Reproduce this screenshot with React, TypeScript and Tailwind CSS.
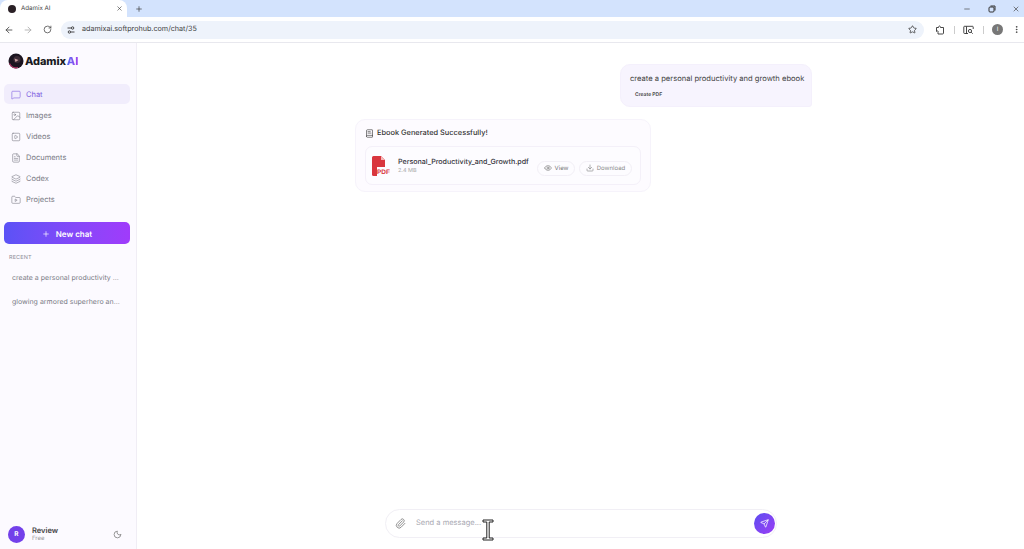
import React from "react";
import { ArrowLeft, ArrowRight, RotateCw, Star, X, Plus, Minus, MessageSquare, Image, SquarePlay, FileText, Layers, BookText, Eye, Download, Paperclip, Send, Moon, MoreVertical } from "lucide-react";

function FolderPlay({ size = 10, strokeWidth = 1.4 }: { size?: number; strokeWidth?: number }) {
  return (
    <svg width={size} height={size} viewBox="0 0 24 24" fill="none" stroke="currentColor" strokeWidth={strokeWidth} strokeLinecap="round" strokeLinejoin="round">
      <path d="M20 20a2 2 0 0 0 2-2V8a2 2 0 0 0-2-2h-7.9a2 2 0 0 1-1.69-.9L9.6 3.9A2 2 0 0 0 7.93 3H4a2 2 0 0 0-2 2v13a2 2 0 0 0 2 2Z" />
      <path d="M10 10.5v5l4-2.5z" />
    </svg>
  );
}

const nav = [
  { label: "Chat", Icon: MessageSquare, active: true },
  { label: "Images", Icon: Image },
  { label: "Videos", Icon: SquarePlay },
  { label: "Documents", Icon: FileText },
  { label: "Codex", Icon: Layers },
  { label: "Projects", Icon: FolderPlay },
];

function Logo() {
  return (
    <svg width="16" height="16" viewBox="0 0 16 16" className="shrink-0">
      <circle cx="8" cy="8" r="7.5" fill="#1b1420" />
      <circle cx="9" cy="6.5" r="3.6" fill="#3a2a35" />
      <path d="M1.5 10.5c1.5 3.5 5 5 8.5 4" stroke="#b23a6a" strokeWidth="1.2" fill="none" />
      <path d="M6.5 5.5l4 1.5-3 2z" fill="#c9a0a0" />
    </svg>
  );
}

export default function App() {
  return (
    <div className="relative flex h-[549px] w-[1024px] flex-col overflow-hidden bg-white font-['Inter','Liberation_Sans',sans-serif] [text-rendering:geometricPrecision]">
      <div className="flex h-[17px] shrink-0 items-center bg-[#d3e3fd]">
        <div className="flex h-[17px] w-[127px] items-center rounded-t-lg bg-white pl-[8px] pr-[4px]">
          <div className="h-[8px] w-[8px] rounded-full bg-[#2a2026]" />
          <span className="ml-[5px] flex-1 text-[6.2px] text-[#444]">Adamix AI</span>
          <X size={7} className="text-[#333]" />
        </div>
        <Plus size={8} className="ml-[8px] text-[#333]" />
        <div className="ml-auto flex items-center pr-[4px] text-[#444]">
          <Minus size={8} />
          <svg width="8" height="8" viewBox="0 0 8 8" fill="none" stroke="#333" className="ml-[17px]"><rect x="1" y="2" width="5" height="5" rx="1" /><path d="M2.5 1H7v4.5" /></svg>
          <X size={8} className="ml-[16px]" />
        </div>
      </div>

      <div className="flex h-[26px] shrink-0 items-center border-b border-[#e8e8ee] bg-white pl-[4px]">
        <ArrowLeft size={10} className="text-[#444]" />
        <ArrowRight size={10} className="ml-[9px] text-[#aaa]" />
        <RotateCw size={9} className="ml-[10px] text-[#444]" />
        <div className="ml-[9px] flex h-[18px] w-[863px] items-center rounded-full bg-[#eef3fb] pl-[6px] pr-[7px]">
          <svg width="8" height="8" viewBox="0 0 8 8" fill="none" stroke="#333" strokeWidth="0.9">
            <path d="M0.5 2h3.5M7.5 6H4" />
            <circle cx="5.6" cy="2" r="1.2" />
            <circle cx="2.4" cy="6" r="1.2" />
          </svg>
          <span className="ml-[7px] flex-1 text-[7.2px] text-[#444]">adamixai.softprohub.com/chat/35</span>
          <Star size={9} className="text-[#333]" />
        </div>
        <svg width="10" height="10" viewBox="0 0 10 10" fill="none" stroke="#333" strokeWidth="0.9" className="ml-[11px] shrink-0">
          <path d="M1.5 2.5h2c0-2 2-2 2 0h3v5.5a1 1 0 0 1-1 1H3v-1.500c1-1.500-1-2-1.500-1V2.500z" />
        </svg>
        <div className="ml-[9px] h-[8px] w-px shrink-0 bg-[#ccc]" />
        <svg width="11" height="10" viewBox="0 0 11 10" fill="none" stroke="#333" strokeWidth="0.9" className="ml-[8px] shrink-0">
          <path d="M5 8.500H1.500a.7.7 0 0 1-.7-.7V2a.7.7 0 0 1 .7-.7h8a.7.7 0 0 1 .7.7v2" />
          <path d="M3.500 1.500v7" />
          <circle cx="7" cy="6" r="1.600" />
          <path d="M8.200 7.200l1.500 1.500" />
        </svg>
        <div className="ml-[9px] h-[8px] w-px shrink-0 bg-[#ccc]" />
        <div className="ml-[8px] flex h-[11px] w-[11px] shrink-0 items-center justify-center rounded-full bg-[#777] text-[6px] text-white">I</div>
        <MoreVertical size={9} className="ml-[9px] shrink-0 text-[#333]" />
      </div>

      <div className="flex min-h-0 flex-1">
        <aside className="flex w-[137px] shrink-0 flex-col border-r border-[#f0edf5] bg-[#fcfaff]">
          <div className="mb-[5px] flex h-[36px] items-center pl-[8px]">
            <Logo />
            <span className="ml-[1px] text-[11px] font-extrabold leading-none tracking-[-0.1px] text-[#1a1a22]">Adamix</span>
            <span className="ml-[1px] bg-gradient-to-r from-[#4f6af0] to-[#a040f0] bg-clip-text text-[11px] font-extrabold leading-none text-transparent">AI</span>
          </div>
          <nav className="flex flex-col gap-px pl-[4px] pr-[6px]">
            {nav.map(({ label, Icon, active }) => (
              <div key={label} className={`flex h-[20px] items-center rounded-[5px] pl-[7px] pt-[1px] ${active ? "bg-[#f1edfc] text-[#7c5ce0]" : "text-[#7a7a85]"}`}>
                <Icon size={10} strokeWidth={1.4} />
                <span className="ml-[5px] text-[7.5px]">{label}</span>
              </div>
            ))}
          </nav>
          <div className="ml-[4px] mr-[6px] mt-[13px] flex h-[22px] items-center justify-center gap-[6px] rounded-[5px] bg-gradient-to-r from-[#5b52f6] to-[#a03bfb] pt-[1px] text-white">
            <Plus size={8} />
            <span className="text-[8px] font-semibold">New chat</span>
          </div>
          <div className="ml-[9px] mt-[10px] text-[5.5px] tracking-wide text-[#8d8d98]">RECENT</div>
          <div className="ml-[12px] mt-[11px] whitespace-nowrap text-[7px] leading-[10px] text-[#7a7a85]">create a personal productivity ...</div>
          <div className="ml-[12px] mt-[14px] whitespace-nowrap text-[7px] leading-[10px] text-[#7a7a85]">glowing armored superhero an...</div>
          <div className="mt-auto flex h-[29px] items-center pl-[8px] pr-[14px]">
            <div className="flex h-[17px] w-[17px] items-center justify-center rounded-full bg-[#7340ea] text-[6.5px] font-bold text-white">R</div>
            <div className="ml-[7px] flex-1">
              <div className="text-[7.5px] font-semibold leading-[9px] text-[#444]">Review</div>
              <div className="text-[6px] leading-[8px] text-[#999]">Free</div>
            </div>
            <Moon size={9} className="text-[#777]" />
          </div>
        </aside>

        <main className="flex min-w-0 flex-1 flex-col bg-white">
          <div className="flex justify-end pr-[212px] pt-[21px]">
            <div className="flex h-[43px] w-[192px] flex-col rounded-[10px] rounded-br-[3px] border border-[#f4f0fc] bg-[#f7f4fe] pl-[9px] pt-[7px]">
              <span className="whitespace-nowrap text-[7.6px] leading-[13px] text-[#444]">create a personal productivity and growth ebook</span>
              <span className="ml-[5px] mt-[6px] text-[5px] font-semibold leading-[8px] text-[#444]">Create PDF</span>
            </div>
          </div>
          <div className="ml-[218px] mt-[12px] h-[73px] w-[296px] rounded-[10px] border border-[#f6f3fb] bg-[#fdfbff] px-[9px] pt-[7px]">
            <div className="flex items-center gap-[3px] text-[#333]">
              <BookText size={9} strokeWidth={1.6} />
              <span className="whitespace-nowrap text-[7.4px] font-medium leading-[12px]">Ebook Generated Successfully!</span>
            </div>
            <div className="mt-[7px] flex h-[39px] items-center rounded-[7px] border border-[#f4f0f9] bg-[#fdfcff] pl-[6px] pr-[8px]">
              <svg width="18" height="20" viewBox="0 0 18 20" className="shrink-0">
                <path d="M0 1.500A1.500 1.500 0 0 1 1.500 0H9l4 4v7H0z" fill="#d9363e" />
                <path d="M9 0l4 4h-4z" fill="#f6b8b8" />
                <path d="M0 11h5v9H1.500A1.500 1.500 0 0 1 0 18.500z" fill="#d9363e" />
                <text x="5" y="17.500" fontSize="6.5" fontWeight="700" fill="#d9363e" fontFamily="Liberation Sans">PDF</text>
              </svg>
              <div className="ml-[8px] flex-1">
                <div className="whitespace-nowrap text-[7.1px] font-medium leading-[10px] text-[#33333b]">Personal_Productivity_and_Growth.pdf</div>
                <div className="text-[5.5px] leading-[8px] text-[#aaa]">2.4 MB</div>
              </div>
              <div className="mt-[5px] flex h-[15px] w-[38px] items-center justify-center gap-[3px] rounded-full border border-[#f2eff6] text-[#777]">
                <Eye size={8} />
                <span className="text-[6px]">View</span>
              </div>
              <div className="ml-[4px] mt-[5px] flex h-[15px] w-[53px] items-center justify-center gap-[3px] rounded-full border border-[#f2eff6] text-[#888]">
                <Download size={8} />
                <span className="text-[6px]">Download</span>
              </div>
            </div>
          </div>

          <div className="mb-[11px] ml-[248px] mt-auto flex h-[29px] w-[392px] items-center rounded-full border border-[#f1eff5] bg-white pl-[9px] pr-[1px]">
            <Paperclip size={11} className="text-[#888]" />
            <span className="mb-[2px] ml-[10px] flex-1 text-[7.5px] text-[#a9a9b2]">Send a message...</span>
            <div className="flex h-[21px] w-[21px] items-center justify-center rounded-full bg-gradient-to-br from-[#5b4cf0] to-[#9a3cf5] text-white">
              <Send size={9} />
            </div>
          </div>
        </main>
      </div>

      <svg width="12" height="22" viewBox="0 0 12 22" className="absolute left-[482px] top-[519px]" fill="#fff" stroke="#222" strokeWidth="1">
        <path d="M1 1h10v2H7.200v16H11v2H1v-2h3.800V3H1z" />
      </svg>
    </div>
  );
}
